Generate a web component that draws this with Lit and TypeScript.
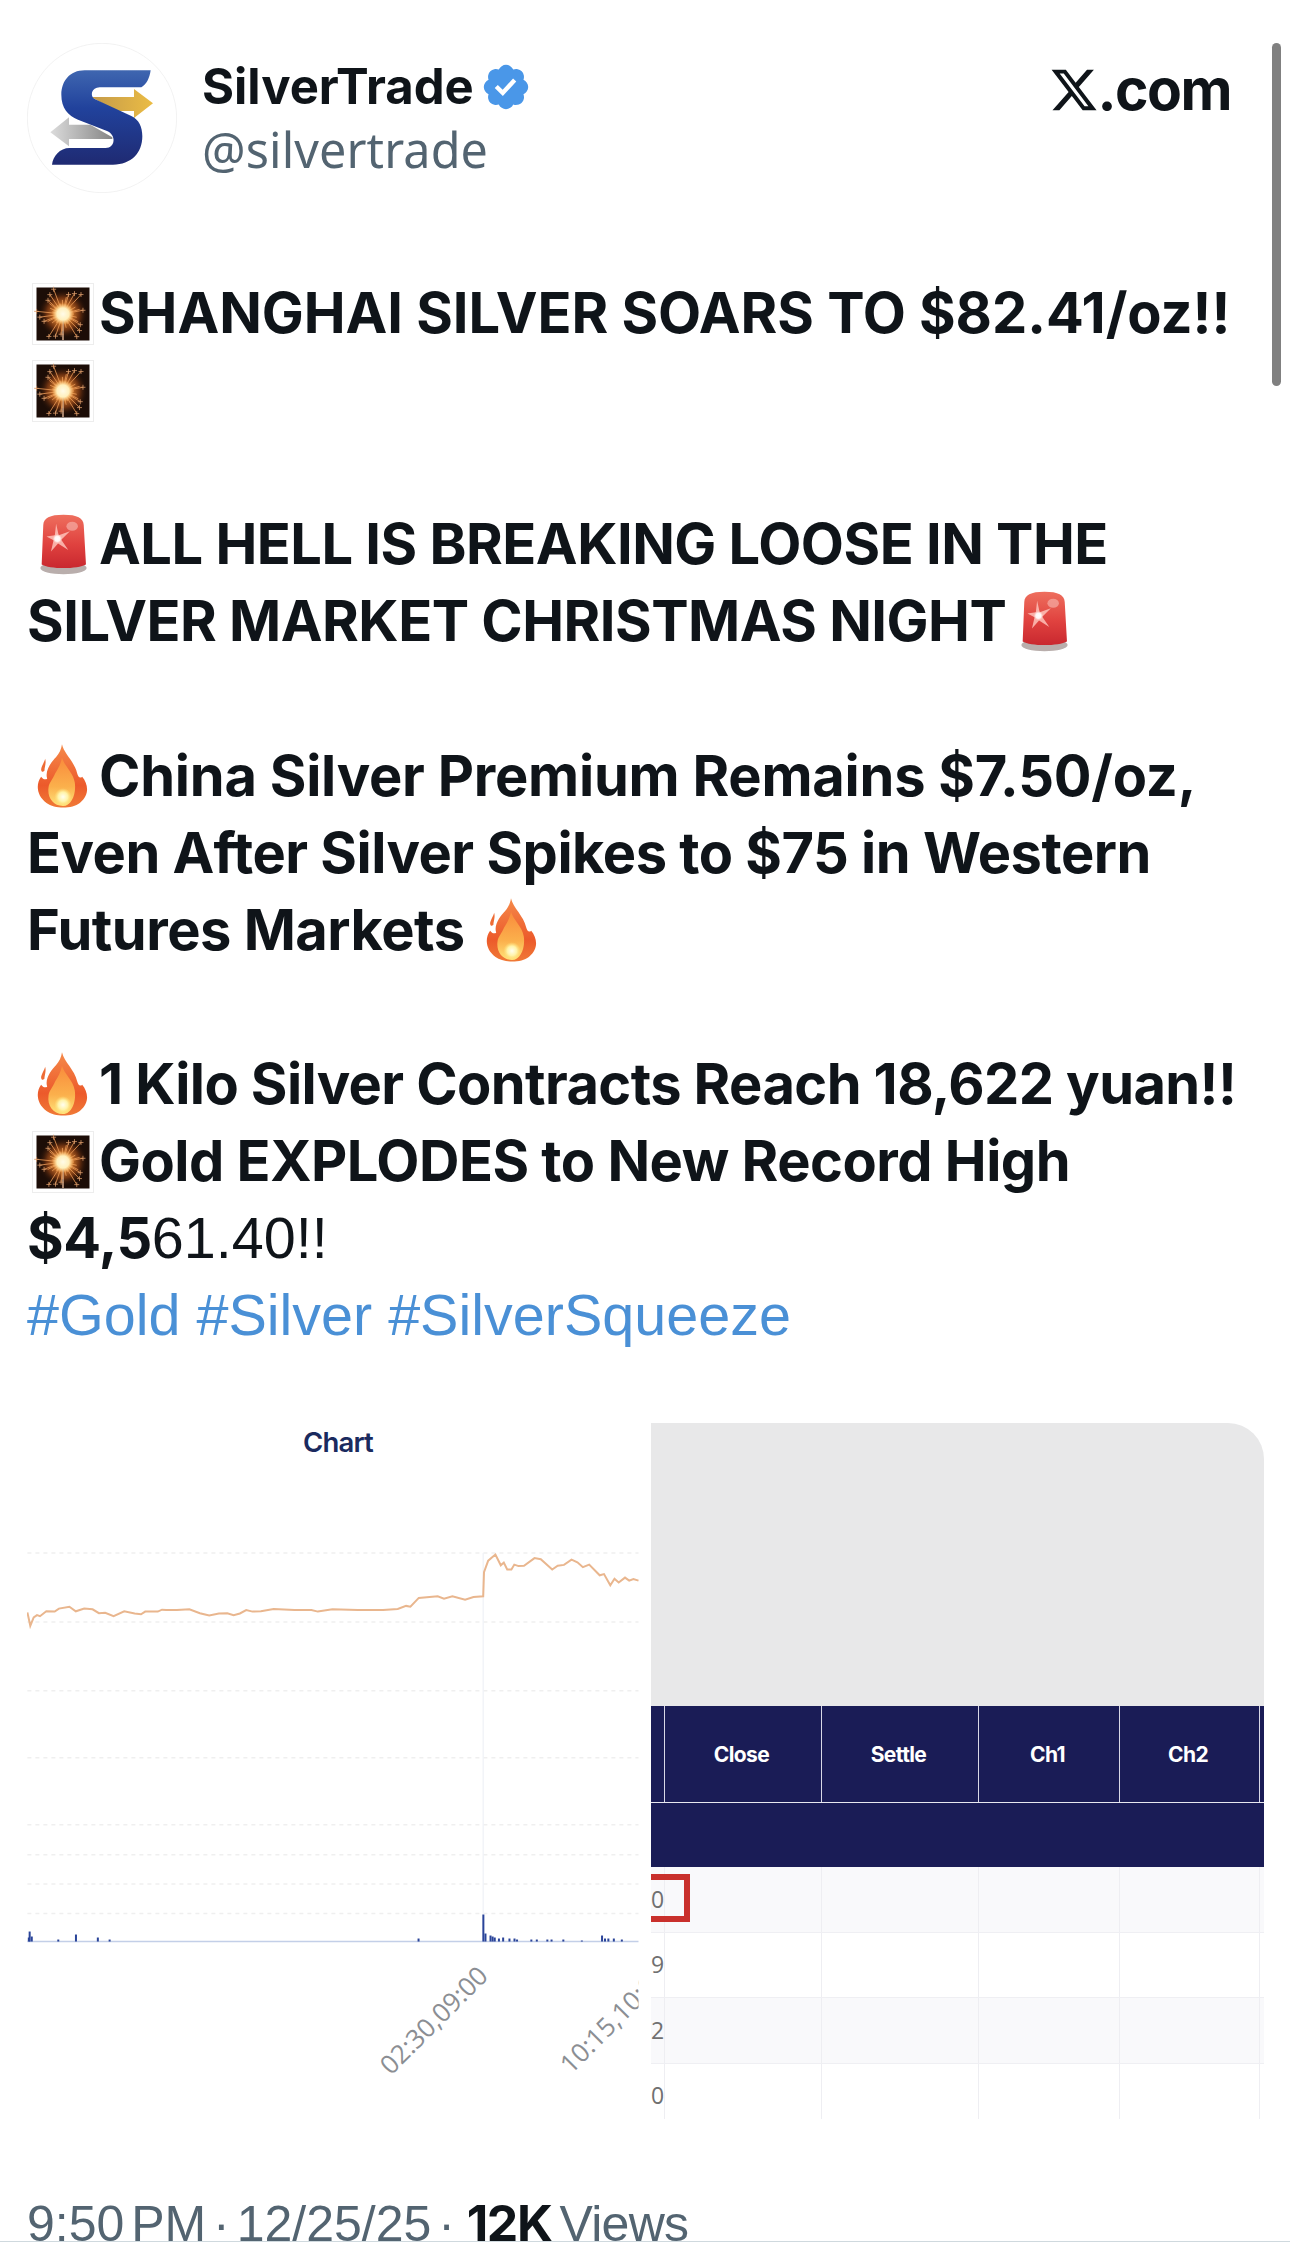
import { LitElement, html, css, svg } from "lit";
import { customElement } from "lit/decorators.js";

const X = (p: number) => p / 2.376 - 27;
const Y = (p: number) => p / 2.613 + 1400 - 1423;
const LINE: [number, number][] = [[65,555],[72,590],[80,568],[88,562],[95,565],[110,552],[130,553],[140,545],[165,540],[180,552],[200,545],[220,547],[235,557],[250,556],[270,565],[295,552],[320,558],[335,560],[345,553],[375,553],[385,548],[395,549],[420,549],[450,547],[475,557],[497,563],[520,558],[540,557],[555,562],[570,558],[585,549],[600,553],[620,552],[650,546],[700,549],[740,549],[755,553],[790,547],[850,549],[910,549],[945,546],[965,538],[975,540],[995,517],[1040,513],[1055,519],[1075,513],[1105,522],[1125,515],[1148,513],[1150,450],[1160,420],[1177,404],[1190,432],[1197,425],[1205,443],[1215,443],[1222,430],[1232,434],[1245,433],[1270,413],[1285,416],[1312,443],[1325,433],[1340,431],[1358,417],[1372,424],[1385,437],[1400,430],[1425,458],[1435,455],[1450,484],[1460,467],[1470,477],[1485,464],[1495,472],[1505,468],[1517,472]];
const GRID = [400, 580, 760, 935, 1110, 1188, 1265, 1342];
const BARS: [number, number][] = [[70,10],[75,5],[68,4],[138,2],[180,7],[232,4],[260,2],[994,3],[1148,27],[1153,8],[1165,6],[1170,5],[1175,4],[1185,3],[1195,4],[1210,3],[1222,3],[1228,2],[1262,2],[1275,2],[1300,2],[1310,2],[1338,2],[1382,1],[1430,6],[1437,3],[1445,3],[1458,3],[1477,2]];

const CX = 26, CY = 26;
const RAYS = Array.from({ length: 34 }, (_, i) => {
  const a = (i / 34) * Math.PI * 2 + (i % 3) * 0.05;
  const r = 11 + ((i * 7) % 6) * 3.1;
  return { a, r, x1: CX + Math.cos(a) * 4, y1: CY + Math.sin(a) * 4, x2: CX + Math.cos(a) * r, y2: CY + Math.sin(a) * r };
});
const TIPS = RAYS.filter((r) => r.r > 20);

const sparkler = () => html`<svg class="emoji spark" viewBox="0 0 62 62" aria-hidden="true">
  <rect x=".5" y=".5" width="61" height="61" fill="#fff" stroke="#ededed"/>
  <rect x="4.500" y="4.500" width="53" height="53" fill="#1c0d07"/>
  <g transform="translate(5 5)">
    <circle cx="26" cy="26" r="25" fill="url(#sg)"/>
    <rect x="25" y="26" width="2" height="26" fill="#a5826a"/>
    ${RAYS.map((r) => svg`<line x1=${r.x1} y1=${r.y1} x2=${r.x2} y2=${r.y2} stroke="#ef9d58" stroke-width=".8"/>`)}
    ${TIPS.map((r) => svg`<path d="M${r.x2 - 2.500} ${r.y2}H${r.x2 + 2.500}M${r.x2} ${r.y2 - 2.500}V${r.y2 + 2.500}" stroke="#d99a6a" stroke-width=".8" fill="none"/>`)}
    <circle cx="26" cy="26" r="11" fill="url(#sc)"/>
  </g>
</svg>`;

const FLAME = "M112 22C118 50 150 75 157 108C160 120 166 124 172 118C190 140 195 172 165 196C142 214 90 214 66 196C36 174 34 140 50 118C55 125 62 128 68 124C60 100 82 72 94 60C104 50 110 36 112 22Z";
const LICK = "M62 65C60 75 50 88 50 98C52 106 58 104 60 100C60 90 66 78 62 65Z";
const flame = (cls: string) => html`<svg class="emoji fire ${cls}" viewBox="36 18 158 196" aria-hidden="true">
  <path fill="url(#fg)" d=${FLAME}/>
  <path fill="#ee6b34" d=${LICK}/>
  <path fill="url(#fy)" d="M112 62C118 85 145 105 150 135C155 170 140 205 115 205C85 205 68 180 72 150C74 135 84 128 92 108C100 95 108 82 112 62Z"/>
  <ellipse cx="115" cy="178" rx="26" ry="26" fill="url(#fw)"/>
</svg>`;

const siren = (cls: string) => html`<svg class="emoji siren ${cls}" viewBox="42 18 146 190" aria-hidden="true">
  <ellipse cx="115" cy="186" rx="72" ry="20" fill="#b9aeac"/>
  <path fill="url(#rg)" d="M47 175L52 52C53 30 72 20 115 20C158 20 177 30 178 52L185 175C160 190 70 190 47 175Z"/>
  <ellipse cx="142" cy="56" rx="18" ry="14" fill="#f4a8a0" opacity=".75"/>
  <path fill="#ffc9c0" opacity=".8" d="M92 48L100 84L135 72L108 98L130 130L98 110L76 135L84 100L62 88L88 84Z"/>
  <circle cx="96" cy="95" r="15" fill="url(#sw)"/>
</svg>`;

const BADGE = "M20.396 11c-.018-.646-.215-1.275-.57-1.816-.354-.54-.852-.972-1.438-1.246.223-.607.27-1.264.14-1.897-.131-.634-.437-1.218-.882-1.687-.47-.445-1.053-.75-1.687-.882-.633-.13-1.29-.083-1.897.14-.273-.587-.704-1.086-1.245-1.44S11.647 1.62 11 1.604c-.646.017-1.273.213-1.813.568s-.969.854-1.24 1.44c-.608-.223-1.267-.272-1.902-.14-.635.13-1.22.436-1.69.882-.445.47-.749 1.055-.878 1.688-.13.633-.08 1.29.144 1.896-.587.274-1.087.705-1.443 1.245-.356.54-.555 1.17-.574 1.817.02.647.218 1.276.574 1.817.356.54.856.972 1.443 1.245-.224.606-.274 1.263-.144 1.896.13.634.433 1.218.877 1.688.47.443 1.054.747 1.687.878.633.132 1.29.084 1.897-.136.274.586.705 1.084 1.246 1.439.54.354 1.17.551 1.816.569.647-.016 1.276-.213 1.817-.567s.972-.854 1.245-1.44c.604.239 1.266.296 1.903.164.636-.132 1.22-.447 1.68-.907.46-.46.776-1.044.908-1.681s.075-1.299-.165-1.903c.586-.274 1.084-.705 1.439-1.246.354-.54.551-1.17.569-1.816zM9.662 14.85l-3.429-3.428 1.293-1.302 2.072 2.072 4.4-4.794 1.347 1.246z";
const XLOGO = "M18.244 2.25h3.308l-7.227 8.26 8.502 11.24H16.17l-5.214-6.817L4.99 21.75H1.68l7.73-8.835L1.254 2.25H8.08l4.713 6.231zm-1.161 17.52h1.833L7.084 4.126H5.117z";

@customElement("app-root")
export class AppRoot extends LitElement {
  static styles = css`
    :host { display: block; position: relative; width: 1290px; height: 2265px; overflow: hidden; background: #fff; color: #0f1419; font-family: Inter, "Liberation Sans", sans-serif; }
    .defs { position: absolute; width: 0; height: 0; }
    .page { display: flex; flex-direction: column; padding: 43px 27px 0; box-sizing: border-box; width: 1290px; }
    .head { display: flex; align-items: flex-start; height: 150px; }
    .avatar { width: 150px; height: 150px; flex: none; }
    .who { margin-left: 25px; flex: 1; padding-top: 17px; }
    .name { display: flex; align-items: center; font-size: 49px; font-weight: 700; line-height: 54px; letter-spacing: 0; }
    .badge { width: 52px; height: 52px; margin-left: 6px; }
    .handle { font-family: "Noto Sans", sans-serif; font-size: 48.500px; line-height: 54px; margin-top: 8px; color: #536471; letter-spacing: 0.1px; }
    .brand { display: flex; align-items: center; margin-top: 22px; margin-right: 32px; font-size: 57px; font-weight: 700; line-height: 44px; letter-spacing: -1.500px; }
    .xlogo { width: 50px; height: 50px; margin-right: -2px; }
    .tweet { margin-top: 82px; font-size: 56px; font-weight: 700; line-height: 77.1px; white-space: nowrap; letter-spacing: -0.500px; }
    .line { height: 77.1px; display: flex; align-items: center; }
    .wide { letter-spacing: -0.050px; }
    .mid { letter-spacing: -0.230px; }
    .tight { letter-spacing: -0.600px; }
    .reg { font-family: "Liberation Sans", sans-serif; font-weight: 400; font-size: 57.500px; letter-spacing: 0; }
    .tag { font-family: "Liberation Sans", sans-serif; font-weight: 400; font-size: 57.500px; color: #4a90d6; letter-spacing: 0; }
    .emoji { flex: none; }
    .spark { width: 62px; height: 62px; margin: 0 5px 0 5px; }
    .fire { width: 54px; height: 66px; margin: 0 9px 0 9px; }
    .siren { width: 47px; height: 61px; margin: 0 12px 0 13px; }
    .fire.end { margin: 0 0 0 20px; }
    .siren.end { margin: 0 0 0 15px; }
    .media { display: grid; grid-template-columns: 624px 613px; margin-top: 69px; height: 696px; }
    .chart { width: 624px; height: 696px; display: block; }
    .panel { display: flex; flex-direction: column; height: 696px; overflow: hidden; border-top-right-radius: 36px; position: relative; }
    .gray { height: 283px; background: #e8e8e9; flex: none; }
    .cols { display: grid; grid-template-columns: 14px 157px 157px 141px 140px 4px; }
    .hrow { height: 97px; flex: none; background: #1a1c56; color: #fff; font-size: 21px; font-weight: 700; letter-spacing: -0.600px; border-bottom: 1px solid #e8e8f0; box-sizing: border-box; }
    .hrow > div { display: flex; align-items: center; justify-content: center; border-right: 1px solid #d8d8e6; padding-right: 3px; }
    .hrow > div:last-child { border-right: 0; padding-right: 0; }
    .band { height: 64px; background: #1a1c56; flex: none; }
    .row { height: 65.500px; border-bottom: 1px solid #efeff3; box-sizing: border-box; flex: none; background: #fff; }
    .row.alt { background: #f9f9fb; }
    .row > div { border-right: 1px solid #eeeef2; display: flex; align-items: center; color: #707070; font-family: "Open Sans", sans-serif; font-size: 23px; padding-bottom: 2px; }
    .row > div:last-child { border-right: 0; }
    .redbox { position: absolute; left: -8px; top: 451px; width: 47px; height: 48px; border: 6px solid #c9302c; box-sizing: border-box; }
    .foot { margin-top: 81px; height: 41px; border-bottom: 1px solid #cfd9de; box-sizing: content-box; margin-left: -27px; margin-right: -27px; padding-left: 27px; font-family: "Liberation Sans", sans-serif; font-size: 50px; line-height: 47px; color: #536471; letter-spacing: 0; word-spacing: -7px; white-space: nowrap; }
    .foot b { color: #0f1419; font-family: Inter, sans-serif; letter-spacing: -1.400px; margin-left: 5px; }
    .foot span { letter-spacing: -0.700px; margin-left: 1px; }
    .scroll { position: absolute; left: 1272px; top: 43px; width: 9px; height: 343px; border-radius: 5px; background: #808080; }
  `;

  render() {
    const d = LINE.map(([x, y], i) => `${i ? "L" : "M"}${X(x).toFixed(1)} ${Y(y).toFixed(1)}`).join(" ");
    const base = Y(1415);
    return html`<svg class="defs" aria-hidden="true"><defs>
        <radialGradient id="sg"><stop offset="0" stop-color="#ffd792"/><stop offset=".3" stop-color="#e98a33"/><stop offset=".65" stop-color="#8a3f14" stop-opacity=".75"/><stop offset="1" stop-color="#1c0d07" stop-opacity="0"/></radialGradient>
        <radialGradient id="sc"><stop offset="0" stop-color="#fffbe8"/><stop offset=".55" stop-color="#fff0bd"/><stop offset="1" stop-color="#ffcf7c" stop-opacity="0"/></radialGradient>
        <radialGradient id="sw"><stop offset="0" stop-color="#ffffff"/><stop offset=".55" stop-color="#ffffff" stop-opacity=".9"/><stop offset="1" stop-color="#ffd4cc" stop-opacity="0"/></radialGradient>
        <linearGradient id="fg" x1="0" y1="0" x2="0" y2="1"><stop offset="0" stop-color="#f58a4a"/><stop offset=".65" stop-color="#ec5a2b"/><stop offset="1" stop-color="#f07a36"/></linearGradient>
        <linearGradient id="fy" x1="0" y1="0" x2="0" y2="1"><stop offset="0" stop-color="#f98b3c"/><stop offset=".6" stop-color="#fbb04c"/><stop offset="1" stop-color="#ffe37a"/></linearGradient>
        <radialGradient id="fw"><stop offset="0" stop-color="#fffef0"/><stop offset=".55" stop-color="#fff3a8"/><stop offset="1" stop-color="#ffe27a" stop-opacity="0"/></radialGradient>
        <linearGradient id="rg" x1="0" y1="0" x2="0" y2="1"><stop offset="0" stop-color="#ee6f5e"/><stop offset=".55" stop-color="#e0423f"/><stop offset="1" stop-color="#c9282f"/></linearGradient>
      </defs></svg>
      <div class="page">
        <div class="head">
          <svg class="avatar" viewBox="22 10 450 450" aria-hidden="true">
            <defs>
              <linearGradient id="sb" x1="0" y1="0" x2="0" y2="1"><stop offset="0" stop-color="#3f66b0"/><stop offset=".4" stop-color="#21429c"/><stop offset="1" stop-color="#1f2a72"/></linearGradient>
              <linearGradient id="gd" x1="0" y1="0" x2="1" y2="0"><stop offset="0" stop-color="#c49a4a"/><stop offset="1" stop-color="#ebbc44"/></linearGradient>
              <linearGradient id="sv" x1="0" y1="0" x2="1" y2="0"><stop offset="0" stop-color="#dcdcdc"/><stop offset="1" stop-color="#858585"/></linearGradient>
            </defs>
            <circle cx="247" cy="235" r="224" fill="#fff" stroke="#ececec" stroke-width="2"/>
            <path fill="url(#gd)" d="M215 172H343V148L400 191L343 235V214H290Z"/>
            <path fill="url(#sv)" d="M92 278L148 233V255H212L278 293V298H148V320Z"/>
            <path fill="url(#sb)" d="M393 92H195C150 92 125 125 125 165C125 205 145 228 175 240L262 274C290 285 288 325 258 325H150C120 325 100 350 97 375H280C335 375 368 340 368 290C368 262 358 240 335 229L225 178C210 170 215 143 240 143H365C380 135 390 115 393 92Z"/>
          </svg>
          <div class="who">
            <div class="name">SilverTrade<svg class="badge" viewBox="0 0 22 22" aria-label="Verified"><path fill="#4a97e8" d=${BADGE}/></svg></div>
            <div class="handle">@silvertrade</div>
          </div>
          <div class="brand"><svg class="xlogo" viewBox="0 0 24 24" aria-hidden="true"><path fill="#0f1419" d=${XLOGO}/></svg>.com</div>
        </div>

        <div class="tweet">
          <div class="line wide">${sparkler()}<span>SHANGHAI SILVER SOARS TO $82.41/oz!!</span></div>
          <div class="line">${sparkler()}</div>
          <div class="line"></div>
          <div class="line">${siren("")}<span>ALL HELL IS BREAKING LOOSE IN THE</span></div>
          <div class="line"><span>SILVER MARKET CHRISTMAS NIGHT</span>${siren("end")}</div>
          <div class="line"></div>
          <div class="line mid">${flame("")}<span>China Silver Premium Remains $7.50/oz,</span></div>
          <div class="line"><span>Even After Silver Spikes to $75 in Western</span></div>
          <div class="line"><span>Futures Markets</span>${flame("end")}</div>
          <div class="line"></div>
          <div class="line tight">${flame("")}<span>1 Kilo Silver Contracts Reach 18,622 yuan!!</span></div>
          <div class="line">${sparkler()}<span>Gold EXPLODES to New Record High</span></div>
          <div class="line"><span>$4,5</span><span class="reg">61.40!!</span></div>
          <div class="line"><span class="tag">#Gold #Silver #SilverSqueeze</span></div>
        </div>

        <div class="media">
          <svg class="chart" viewBox="0 0 624 696" aria-label="Chart">
            <text x="311" y="29" text-anchor="middle" font-size="27.500" font-weight="600" fill="#1a2a5e" font-family="Inter, sans-serif" letter-spacing="-0.8">Chart</text>
            ${GRID.map((g) => svg`<line x1="0.400" x2="611.500" y1=${Y(g)} y2=${Y(g)} stroke="#efefef" stroke-width="1.500" stroke-dasharray="4 4"/>`)}
            <line x1=${X(1148)} x2=${X(1148)} y1=${Y(400)} y2=${base} stroke="#eef1f6" stroke-width="1.200"/>
            <path d=${d} fill="none" stroke="#e9b68e" stroke-width="2"/>
            <line x1="0.400" x2="611.500" y1=${base} y2=${base} stroke="#c3cfe8" stroke-width="1.500"/>
            ${BARS.map(([x, h]) => svg`<rect x=${X(x) - 0.8} y=${base - h} width="2" height=${h} fill="#2a4499"/>`)}
            <defs><clipPath id="cp"><rect x="0" y="0" width="611.500" height="696"/></clipPath></defs>
            <g clip-path="url(#cp)" font-family="'Open Sans', sans-serif" font-size="26" fill="#8b8e93">
              <text transform="translate(364 653) rotate(-45)">02:30,09:00</text>
              <text transform="translate(544 652) rotate(-45)">10:15,10:00</text>
            </g>
          </svg>
          <div class="panel">
            <div class="gray"></div>
            <div class="cols hrow"><div></div><div>Close</div><div>Settle</div><div>Ch1</div><div>Ch2</div><div></div></div>
            <div class="band"></div>
            ${["0", "9", "2", "0"].map((n, i) => html`<div class="cols row ${i % 2 ? "" : "alt"}"><div>${n}</div><div></div><div></div><div></div><div></div><div></div></div>`)}
            <div class="redbox"></div>
          </div>
        </div>

        <div class="foot">9:50 PM · 12/25/25 · <b>12K</b> <span>Views</span></div>
      </div>
      <div class="scroll"></div>`;
  }
}
